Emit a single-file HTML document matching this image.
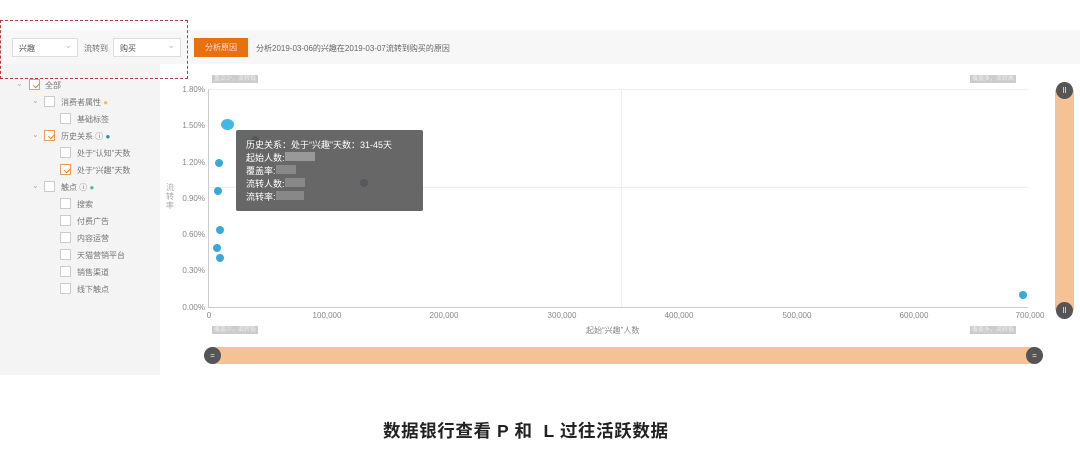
<!DOCTYPE html>
<html><head><meta charset="utf-8"><style>
*{margin:0;padding:0;box-sizing:border-box}
body{width:1080px;height:471px;background:#fff;position:relative;overflow:hidden;font-family:"Liberation Sans","Noto Sans CJK SC",sans-serif;color:#666}
.a{position:absolute}
.t{font-size:8px;color:#888;white-space:nowrap}
.sel{position:absolute;top:38px;height:19px;border:1px solid #ddd;background:#fff;font-size:8px;color:#555;padding:4px 6px}
.sel:after{content:"⌄";position:absolute;right:5px;top:1px;color:#bbb;font-size:9px}
.cb{position:absolute;width:11px;height:11px;border:1px solid #ccc;background:#fff}
.cb.on{border-color:#e8a060}
.cb.on:after{content:"";position:absolute;left:2px;top:0px;width:5px;height:3px;border-left:1.5px solid #e08030;border-bottom:1.5px solid #e08030;transform:rotate(-45deg) translate(-1px,3px)}
.lbl{position:absolute;font-size:8px;color:#777;white-space:nowrap}
.tag{position:absolute;height:8px;background:#ccc;font-size:6px;color:#eee;padding:0 2px;line-height:8px}
.yl{position:absolute;left:160px;width:45px;text-align:right;font-size:8px;color:#888}
.xl{position:absolute;top:311px;font-size:8px;color:#888;transform:translateX(-50%)}
.dot{position:absolute;border-radius:50%;background:#3aa8d8}
.h{position:absolute;width:17px;height:17px;border-radius:50%;background:#555;color:#eee;font-size:8px;text-align:center;line-height:17px}
</style></head><body>
<div class="a" style="left:0;top:30px;width:1080px;height:345px;background:#f4f4f4"></div>
<div class="a" style="left:160px;top:64px;width:920px;height:311px;background:#fff"></div>
<div class="a" style="left:0;top:30px;width:1080px;height:34px;background:#f7f7f7"></div>
<div class="a" style="left:0;top:20px;width:188px;height:59px;border:1px dashed #b04040"></div>
<div class="sel" style="left:12px;width:66px">兴趣</div>
<div class="lbl" style="left:84px;top:43px">流转到</div>
<div class="sel" style="left:113px;width:68px">购买</div>
<div class="a" style="left:194px;top:38px;width:54px;height:19px;background:#e8700f;color:#fdd;font-size:8px;text-align:center;line-height:19px">分析原因</div>
<div class="lbl" style="left:256px;top:43px;color:#666">分析2019-03-06的兴趣在2019-03-07流转到购买的原因</div>

<div class="lbl" style="left:16px;top:79px;color:#aaa">⌄</div><div class="cb on" style="left:29px;top:79px"></div><div class="lbl" style="left:45px;top:80px">全部</div>
<div class="lbl" style="left:32px;top:96px;color:#aaa">⌄</div><div class="cb" style="left:44px;top:96px"></div><div class="lbl" style="left:61px;top:97px">消费者属性 <span style="color:#f0c060">●</span></div>
<div class="cb" style="left:60px;top:113px"></div><div class="lbl" style="left:77px;top:114px">基础标签</div>
<div class="lbl" style="left:32px;top:130px;color:#aaa">⌄</div><div class="cb on" style="left:44px;top:130px"></div><div class="lbl" style="left:61px;top:131px">历史关系 ⓘ <span style="color:#2090b0">●</span></div>
<div class="cb" style="left:60px;top:147px"></div><div class="lbl" style="left:77px;top:148px">处于“认知”天数</div>
<div class="cb on" style="left:60px;top:164px"></div><div class="lbl" style="left:77px;top:165px">处于“兴趣”天数</div>
<div class="lbl" style="left:32px;top:181px;color:#aaa">⌄</div><div class="cb" style="left:44px;top:181px"></div><div class="lbl" style="left:61px;top:182px">触点 ⓘ <span style="color:#50c090">●</span></div>
<div class="cb" style="left:60px;top:198px"></div><div class="lbl" style="left:77px;top:199px">搜索</div>
<div class="cb" style="left:60px;top:215px"></div><div class="lbl" style="left:77px;top:216px">付费广告</div>
<div class="cb" style="left:60px;top:232px"></div><div class="lbl" style="left:77px;top:233px">内容运营</div>
<div class="cb" style="left:60px;top:249px"></div><div class="lbl" style="left:77px;top:250px">天猫营销平台</div>
<div class="cb" style="left:60px;top:266px"></div><div class="lbl" style="left:77px;top:267px">销售渠道</div>
<div class="cb" style="left:60px;top:283px"></div><div class="lbl" style="left:77px;top:284px">线下触点</div>

<div class="tag" style="left:212px;top:75px">重点少，流转低</div>
<div class="tag" style="left:970px;top:75px">覆盖多，流转高</div>
<div class="tag" style="left:212px;top:326px">覆盖少，流转低</div>
<div class="tag" style="left:970px;top:326px">覆盖多，流转低</div>
<div class="a" style="left:208px;top:89px;width:820px;height:1px;background:#f0f0f0"></div>
<div class="a" style="left:208px;top:187px;width:820px;height:1px;background:#eee"></div>
<div class="a" style="left:621px;top:89px;width:1px;height:218px;background:#eee"></div>
<div class="a" style="left:208px;top:89px;width:1px;height:218px;background:#ccc"></div>
<div class="a" style="left:208px;top:307px;width:820px;height:1px;background:#ccc"></div>
<div class="yl" style="top:85px">1.80%</div><div class="yl" style="top:121px">1.50%</div><div class="yl" style="top:158px">1.20%</div><div class="yl" style="top:194px">0.90%</div><div class="yl" style="top:230px">0.60%</div><div class="yl" style="top:266px">0.30%</div><div class="yl" style="top:303px">0.00%</div>
<div class="lbl" style="left:166px;top:183px;width:8px;line-height:9px;color:#aaa;white-space:normal">流转率</div>
<div class="xl" style="left:209px">0</div><div class="xl" style="left:327px">100,000</div><div class="xl" style="left:444px">200,000</div><div class="xl" style="left:562px">300,000</div><div class="xl" style="left:679px">400,000</div><div class="xl" style="left:797px">500,000</div><div class="xl" style="left:914px">600,000</div><div class="xl" style="left:1030px">700,000</div>
<div class="t a" style="left:586px;top:325px">起始“兴趣”人数</div>

<div class="dot" style="left:221px;top:119px;width:13px;height:11px;background:#40b8e8"></div>
<div class="dot" style="left:251px;top:136px;width:8px;height:8px;background:#1f5566"></div>
<div class="dot" style="left:215px;top:159px;width:8px;height:8px"></div>
<div class="dot" style="left:214px;top:187px;width:8px;height:8px"></div>
<div class="dot" style="left:216px;top:226px;width:8px;height:8px"></div>
<div class="dot" style="left:213px;top:244px;width:8px;height:8px"></div>
<div class="dot" style="left:216px;top:254px;width:8px;height:8px"></div>
<div class="dot" style="left:360px;top:179px;width:8px;height:8px;background:#1f5566"></div>
<div class="dot" style="left:1019px;top:291px;width:8px;height:8px"></div>

<div class="a" style="left:236px;top:130px;width:187px;height:81px;background:rgba(90,90,90,.92);border-radius:2px;color:#fff;font-size:9px;line-height:13px;padding:9px 10px">历史关系：处于“兴趣”天数：31-45天<br>起始人数:<span style="display:inline-block;width:30px;height:9px;background:#999"></span><br>覆盖率:<span style="display:inline-block;width:20px;height:9px;background:#888"></span><br>流转人数:<span style="display:inline-block;width:20px;height:9px;background:#888"></span><br>流转率:<span style="display:inline-block;width:28px;height:9px;background:#888"></span></div>

<div class="a" style="left:1055px;top:90px;width:19px;height:220px;background:#f5c296"></div>
<div class="h" style="left:1056px;top:82px">II</div>
<div class="h" style="left:1056px;top:302px">II</div>
<div class="a" style="left:212px;top:347px;width:822px;height:17px;background:#f5c296"></div>
<div class="h" style="left:204px;top:347px">=</div>
<div class="h" style="left:1026px;top:347px">=</div>

<div class="a" style="left:383px;top:418px;font-size:17.5px;font-weight:bold;color:#222;white-space:nowrap;letter-spacing:0.6px">数据银行查看 P 和&nbsp; L 过往活跃数据</div>
</body></html>
